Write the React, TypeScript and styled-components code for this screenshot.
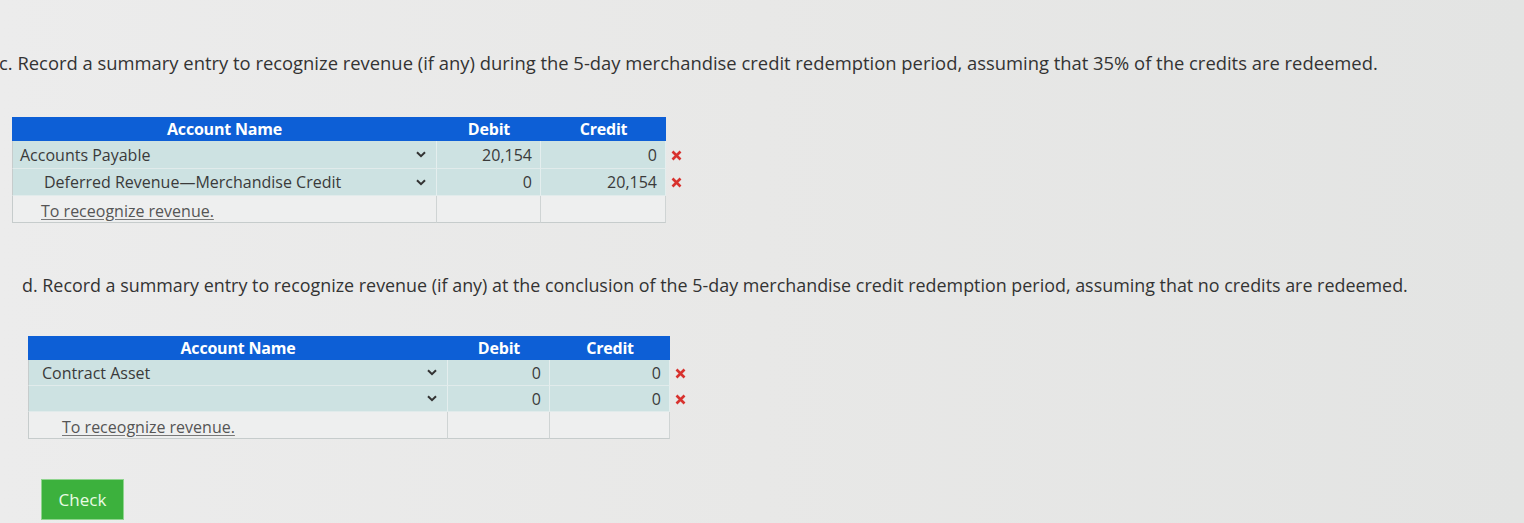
import React from 'react'
import styled, { createGlobalStyle } from 'styled-components'

type Line = {
  account: string
  indent: number
  debit: string
  credit: string
}

type Entry = {
  cols: string
  rowHeights: number[]
  lines: Line[]
  memoIndent: number
}

const GlobalStyle = createGlobalStyle`
  body {
    margin: 0;
    background: linear-gradient(90deg, #ececec 0%, #e8e8e7 50%, #e3e4e3 100%);
    font-family: "Open Sans", "Liberation Sans", sans-serif;
    color: #353535;
  }
`

const Page = styled.div`
  height: 523px;
  overflow: hidden;
  display: flex;
  flex-direction: column;
`

const Prompt = styled.p<{ $left: number; $top: number; $size: number }>`
  margin: ${({ $top }) => $top}px 0 0 ${({ $left }) => $left}px;
  font-size: ${({ $size }) => $size}px;
  line-height: 24px;
  color: #333;
  white-space: nowrap;
`

const Grid = styled.div<{ $cols: string; $left: number; $top: number }>`
  display: grid;
  grid-template-columns: ${({ $cols }) => $cols} 24px;
  width: max-content;
  margin: ${({ $top }) => $top}px 0 0 ${({ $left }) => $left}px;
  font-size: 16px;
`

const HeadCell = styled.div`
  height: 24px;
  line-height: 24px;
  background: #0d5fd6;
  color: #fff;
  font-weight: 700;
  text-align: center;
  font-size: 16px;
  letter-spacing: -0.2px;
`

const Cell = styled.div<{ $h: number; $memo?: boolean }>`
  height: ${({ $h }) => $h}px;
  box-sizing: border-box;
  display: flex;
  align-items: center;
  background: ${({ $memo }) => ($memo ? '#eeefef' : '#cde2e2')};
  border-right: 1px solid ${({ $memo }) => ($memo ? '#cfd4d4' : '#e4eeee')};
  border-bottom: 1px solid ${({ $memo }) => ($memo ? '#c6cccc' : '#e1ebeb')};
`

const AccountCell = styled(Cell)`
  border-left: 1px solid #c6cccc;
  justify-content: space-between;
  padding-right: 10px;
`

const AmountCell = styled(Cell)`
  justify-content: flex-end;
  padding-right: 8px;
  color: #3a3a3a;
`

const Label = styled.span<{ $indent: number }>`
  padding-left: ${({ $indent }) => $indent}px;
  color: #3a3a3a;
`

const Memo = styled.span<{ $indent: number }>`
  padding-left: ${({ $indent }) => $indent}px;
  padding-top: 3px;
  color: #555;
  text-decoration: underline;
  text-decoration-color: #777;
  text-underline-offset: 2px;
`

const Mark = styled.div<{ $h: number }>`
  height: ${({ $h }) => $h}px;
  display: flex;
  align-items: center;
  padding-left: 5px;
`

const Blank = styled.div``

const CheckButton = styled.button`
  all: unset;
  margin: 41px 0 0 42px;
  width: 81px;
  height: 39px;
  background: #3cb13d;
  color: #e9fbe4;
  font-size: 17px;
  text-align: center;
  line-height: 39px;
  box-shadow: 0 0 0 1px #8fd48e;
  cursor: pointer;
`

const Chevron = () => (
  <svg width="10" height="7" viewBox="0 0 10 7">
    <path d="M1 1.2 L5 5.2 L9 1.2" fill="none" stroke="#333" strokeWidth="2" />
  </svg>
)

const Cross = () => (
  <svg width="11" height="11" viewBox="0 0 11 11">
    <path d="M1.5 1.5 L9.5 9.5 M9.5 1.5 L1.5 9.5" stroke="#d8322e" strokeWidth="2.6" />
  </svg>
)

const JournalTable = ({ entry, left, top }: { entry: Entry; left: number; top: number }) => {
  const memoH = entry.rowHeights[entry.lines.length]
  return (
    <Grid $cols={entry.cols} $left={left} $top={top}>
      <HeadCell>Account Name</HeadCell>
      <HeadCell>Debit</HeadCell>
      <HeadCell>Credit</HeadCell>
      <Blank />
      {entry.lines.map((line, i) => (
        <React.Fragment key={i}>
          <AccountCell $h={entry.rowHeights[i]}>
            <Label $indent={line.indent}>{line.account}</Label>
            <Chevron />
          </AccountCell>
          <AmountCell $h={entry.rowHeights[i]}>{line.debit}</AmountCell>
          <AmountCell $h={entry.rowHeights[i]}>{line.credit}</AmountCell>
          <Mark $h={entry.rowHeights[i]}>
            <Cross />
          </Mark>
        </React.Fragment>
      ))}
      <AccountCell $h={memoH} $memo>
        <Memo $indent={entry.memoIndent}>To receognize revenue.</Memo>
      </AccountCell>
      <AmountCell $h={memoH} $memo />
      <AmountCell $h={memoH} $memo />
      <Blank />
    </Grid>
  )
}

const entryC: Entry = {
  cols: '425px 104px 125px',
  rowHeights: [28, 27, 27],
  memoIndent: 28,
  lines: [
    { account: 'Accounts Payable', indent: 7, debit: '20,154', credit: '0' },
    { account: 'Deferred Revenue\u2014Merchandise Credit', indent: 31, debit: '0', credit: '20,154' },
  ],
}

const entryD: Entry = {
  cols: '420px 102px 120px',
  rowHeights: [26, 26, 27],
  memoIndent: 33,
  lines: [
    { account: 'Contract Asset', indent: 13, debit: '0', credit: '0' },
    { account: '', indent: 13, debit: '0', credit: '0' },
  ],
}

export default function App() {
  return (
    <>
      <GlobalStyle />
      <Page>
        <Prompt $left={-1} $top={51} $size={18.4}>
          c. Record a summary entry to recognize revenue (if any) during the 5-day merchandise credit redemption
          period, assuming that 35% of the credits are redeemed.
        </Prompt>
        <JournalTable entry={entryC} left={12} top={42} />
        <Prompt $left={22} $top={50} $size={17.9}>
          d. Record a summary entry to recognize revenue (if any) at the conclusion of the 5-day merchandise credit
          redemption period, assuming that no credits are redeemed.
        </Prompt>
        <JournalTable entry={entryD} left={28} top={39} />
        <CheckButton>Check</CheckButton>
      </Page>
    </>
  )
}
